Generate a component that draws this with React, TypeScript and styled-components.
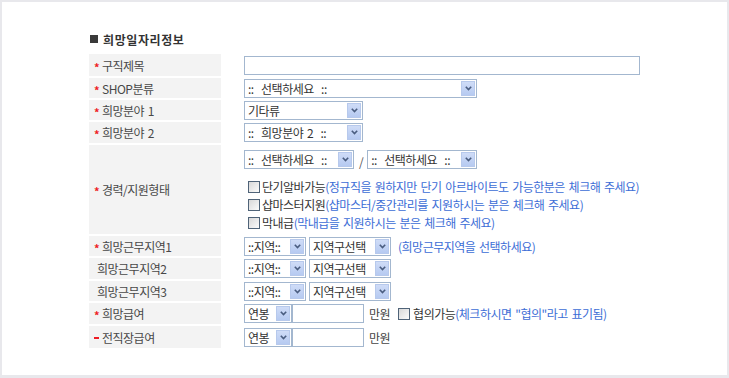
import React from "react";
import styled, { createGlobalStyle } from "styled-components";

const GlobalStyle = createGlobalStyle`
  html, body {
    margin: 0;
    padding: 0;
    background: #e8e8ec;
  }
  body {
    font-family: "Noto Sans CJK KR", "Noto Sans", sans-serif;
    font-size: 12px;
    line-height: 15px;
    color: #444;
  }
`;

const Frame = styled.div`
  width: 729px;
  height: 378px;
  padding: 2px 2px 3px 2px;
  box-sizing: border-box;
`;

const Panel = styled.div`
  background: #fff;
  height: 100%;
  padding: 30px 0 0 87px;
  box-sizing: border-box;
`;

const Title = styled.h2`
  margin: 0;
  display: flex;
  align-items: center;
  height: 14px;
  font-size: 12px;
  font-weight: bold;
  color: #333;
  letter-spacing: 0.6px;
`;

const Square = styled.span`
  width: 8px;
  height: 8px;
  background: #3a3a3a;
  margin: 0 5px 0 1px;
`;

const Form = styled.div`
  margin-top: 8px;
  display: flex;
  flex-direction: column;
  gap: 2px;
  width: 600px;
`;

const Row = styled.div<{ $h: number }>`
  display: grid;
  grid-template-columns: 132px 1fr;
  height: ${(p) => p.$h}px;
`;

const Label = styled.div<{ $mark?: boolean }>`
  background: #f3f3f3;
  display: flex;
  align-items: center;
  padding-left: ${(p) => (p.$mark ? 5 : 8)}px;
  letter-spacing: -0.5px;
  word-spacing: 1.5px;
  color: #484848;
  white-space: pre;
`;

const Mark = styled.span`
  color: #ee1c24;
  width: 8px;
  font-size: 11px;
  font-weight: bold;
  padding-top: 4px;
  letter-spacing: 0;
`;

const Dash = styled.span`
  width: 5px;
  height: 2px;
  background: #ee1c24;
  margin: 1px 3px 0 0;
`;

const Value = styled.div<{ $col?: boolean }>`
  display: flex;
  flex-direction: ${(p) => (p.$col ? "column" : "row")};
  align-items: ${(p) => (p.$col ? "flex-start" : "center")};
  padding-left: 23px;
  padding-top: ${(p) => (p.$col ? 7 : 0)}px;
  letter-spacing: -0.5px;
  word-spacing: 1.5px;
  color: #333;
  white-space: nowrap;
`;

const Line = styled.div<{ $gap?: number }>`
  display: flex;
  align-items: center;
  height: 15px;
  margin-left: ${(p) => p.$gap ?? 0}px;
`;

const TextInput = styled.div<{ $w: number }>`
  width: ${(p) => p.$w}px;
  height: 19px;
  box-sizing: border-box;
  border: 1px solid #a3b7cf;
  background: #fff;
`;

const SelectBox = styled.div<{ $w: number }>`
  width: ${(p) => p.$w}px;
  height: 19px;
  box-sizing: border-box;
  border: 1px solid #a3b7cf;
  background: #fff;
  display: flex;
  align-items: center;
  padding: 1px;
  color: #333;
  flex-shrink: 0;
`;

const SelectText = styled.span`
  flex: 1;
  padding-left: 2px;
  white-space: pre;
  overflow: hidden;
  line-height: 15px;
`;

const Arrow = styled.span`
  width: 14px;
  height: 15px;
  box-sizing: border-box;
  border: 1px solid #b7c9ec;
  background: linear-gradient(#cfdcf7, #b6caf1);
  display: flex;
  align-items: center;
  justify-content: center;
`;

const Slash = styled.span`
  margin: 0 4px 0 5px;
  color: #555;
  padding-top: 4px;
`;

const Check = styled.span`
  width: 12px;
  height: 12px;
  box-sizing: border-box;
  border: 1px solid #4f6378;
  background: linear-gradient(135deg, #d8d8d8, #fbfbfb);
  margin-right: 2px;
  flex-shrink: 0;
`;

const Note = styled.span<{ $gap?: number }>`
  color: #3c6dd6;
  margin-left: ${(p) => p.$gap ?? 0}px;
`;

const Unit = styled.span`
  margin: 0 8px 0 5px;
  color: #444;
`;

const CheckLines = styled.div`
  margin-top: 12px;
  padding-left: 4px;
  display: flex;
  flex-direction: column;
  gap: 3px;
`;

function Select({ w, text }: { w: number; text: string }) {
  return (
    <SelectBox $w={w}>
      <SelectText>{text}</SelectText>
      <Arrow>
        <svg width="7" height="5" viewBox="0 0 7 5">
          <path d="M0.8 0.8 L3.5 3.6 L6.2 0.8" fill="none" stroke="#4a5d80" strokeWidth="1.6" />
        </svg>
      </Arrow>
    </SelectBox>
  );
}

function CheckItem({ label, note }: { label: string; note: string }) {
  return (
    <Line>
      <Check />
      <span>{label}</span>
      <Note>{note}</Note>
    </Line>
  );
}

function FieldLabel({ text, mark }: { text: string; mark?: "star" | "dash" }) {
  return (
    <Label $mark={!!mark}>
      {mark === "star" && <Mark>*</Mark>}
      {mark === "dash" && <Dash />}
      {text}
    </Label>
  );
}

function AreaPair() {
  return (
    <>
      <Select w={62} text="::지역::" />
      <Line $gap={3}>
        <Select w={82} text="지역구선택" />
      </Line>
    </>
  );
}

export default function App() {
  return (
    <>
      <GlobalStyle />
      <Frame>
        <Panel>
          <Title>
            <Square />
            희망일자리정보
          </Title>
          <Form>
            <Row $h={22}>
              <FieldLabel mark="star" text="구직제목" />
              <Value>
                <TextInput $w={396} />
              </Value>
            </Row>
            <Row $h={20}>
              <FieldLabel mark="star" text="SHOP분류" />
              <Value>
                <Select w={233} text="::  선택하세요  ::" />
              </Value>
            </Row>
            <Row $h={20}>
              <FieldLabel mark="star" text="희망분야 1" />
              <Value>
                <Select w={119} text="기타류" />
              </Value>
            </Row>
            <Row $h={21}>
              <FieldLabel mark="star" text="희망분야 2" />
              <Value>
                <Select w={119} text="::  희망분야 2  ::" />
              </Value>
            </Row>
            <Row $h={89}>
              <FieldLabel mark="star" text="경력/지원형태" />
              <Value $col>
                <Line>
                  <Select w={110} text="::  선택하세요  ::" />
                  <Slash>/</Slash>
                  <Select w={110} text="::  선택하세요  ::" />
                </Line>
                <CheckLines>
                  <CheckItem label="단기알바가능" note="(정규직을 원하지만 단기 아르바이트도 가능한분은 체크해 주세요)" />
                  <CheckItem label="샵마스터지원" note="(샵마스터/중간관리를 지원하시는 분은 체크해 주세요)" />
                  <CheckItem label="막내급" note="(막내급을 지원하시는 분은 체크해 주세요)" />
                </CheckLines>
              </Value>
            </Row>
            <Row $h={20}>
              <FieldLabel mark="star" text="희망근무지역1" />
              <Value>
                <AreaPair />
                <Note $gap={7}>(희망근무지역을 선택하세요)</Note>
              </Value>
            </Row>
            <Row $h={21}>
              <FieldLabel text="희망근무지역2" />
              <Value>
                <AreaPair />
              </Value>
            </Row>
            <Row $h={20}>
              <FieldLabel text="희망근무지역3" />
              <Value>
                <AreaPair />
              </Value>
            </Row>
            <Row $h={21}>
              <FieldLabel mark="star" text="희망급여" />
              <Value>
                <Select w={48} text="연봉" />
                <TextInput $w={72} />
                <Unit>만원</Unit>
                <Check />
                <span style={{ marginLeft: 1 }}>협의가능</span>
                <Note>(체크하시면 "협의"라고 표기됨)</Note>
              </Value>
            </Row>
            <Row $h={22}>
              <FieldLabel mark="dash" text="전직장급여" />
              <Value>
                <Select w={48} text="연봉" />
                <TextInput $w={72} />
                <Unit>만원</Unit>
              </Value>
            </Row>
          </Form>
        </Panel>
      </Frame>
    </>
  );
}
